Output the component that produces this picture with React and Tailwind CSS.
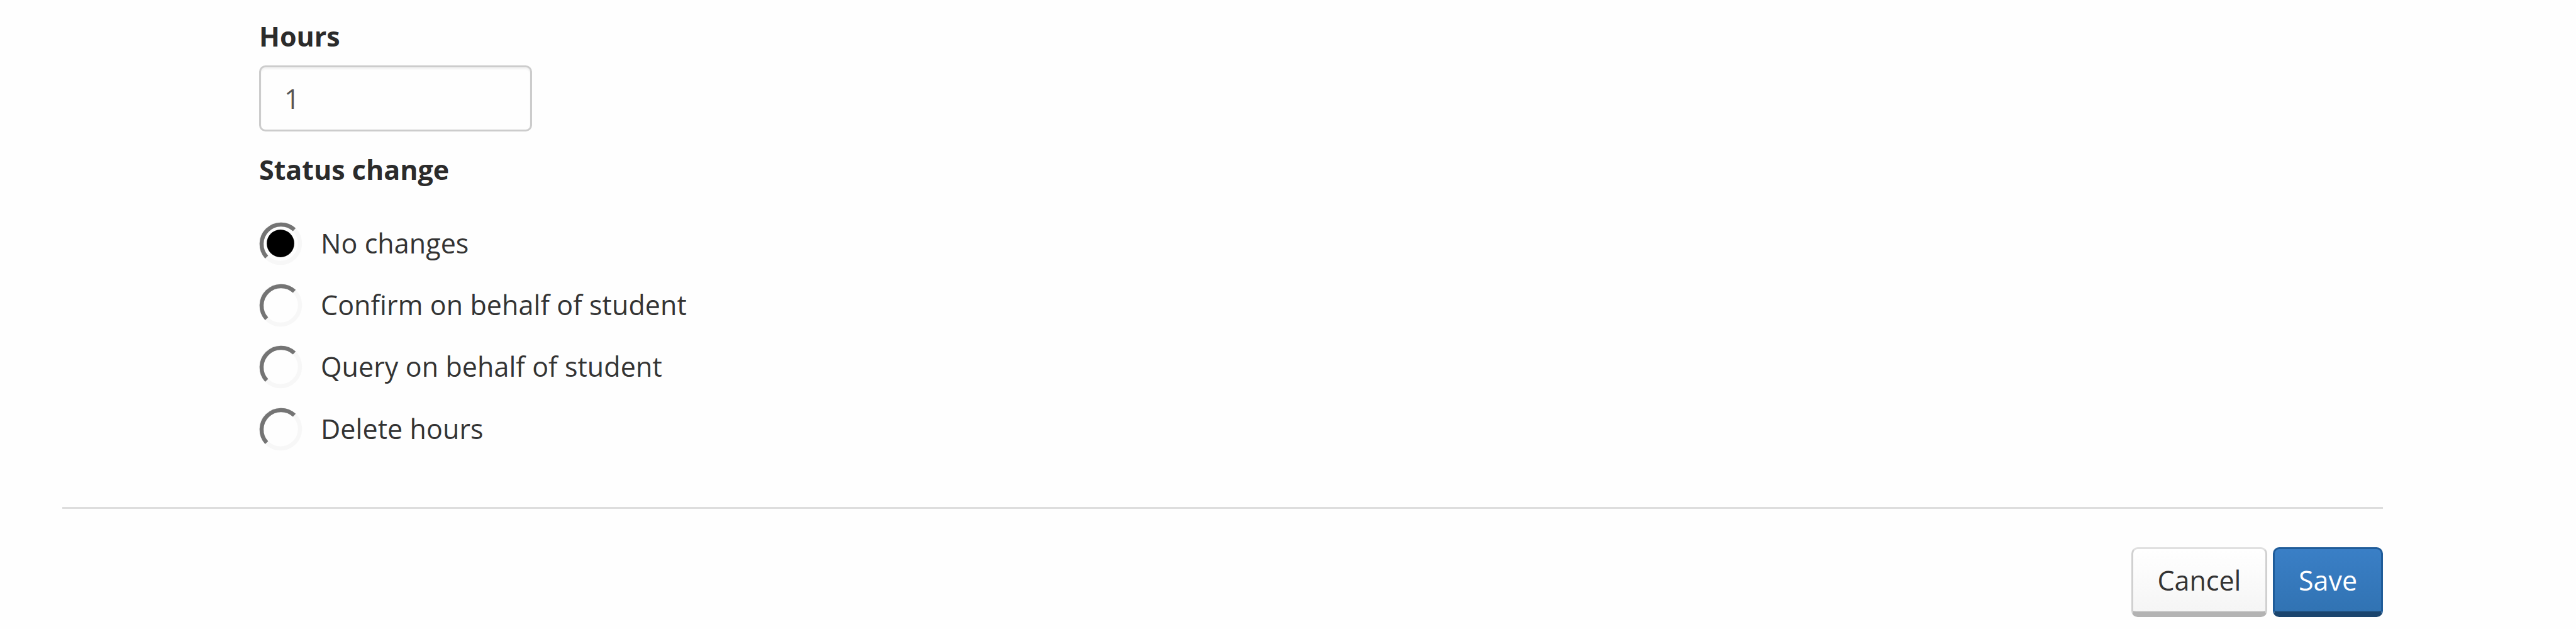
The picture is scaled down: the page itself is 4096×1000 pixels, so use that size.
const OPTIONS = [
  { label: 'No changes', checked: true },
  { label: 'Confirm on behalf of student', checked: false },
  { label: 'Query on behalf of student', checked: false },
  { label: 'Delete hours', checked: false },
];

// Inset-style radio: dark arc at the upper left, pale arc at the lower right.
function Radio({ checked }) {
  return (
    <svg className="-ml-px h-[70px] w-[70px] shrink-0" viewBox="-35 -35 70 70" fill="none">
      <circle r="31" stroke="#f7f7f7" strokeWidth="6.5" />
      <path d="M-22 21.8A31 31 0 0 1 22 -21.8" stroke="#747474" strokeWidth="6.5" />
      {checked && <circle r="21.9" fill="#000" />}
    </svg>
  );
}

export default function App() {
  return (
    <div className="h-[1000px] w-[4096px] overflow-hidden bg-[#fefefe] pt-[27px] pr-[307px] pl-[99px] font-['Open_Sans',sans-serif] text-[43px] leading-[62px] text-[#333]">
      <form className="pl-[313px]">
        <label className="block font-bold text-[#2b2b2b]">
          <span>Hours</span>
        </label>
        <div className="mt-[15px] flex h-[105px] w-[434px] items-center rounded-[10px] border-[3px] border-[#ccc] pl-[37px] text-[#555] shadow-[inset_0_3px_3px_rgba(0,0,0,0.05)]">
          <span>1</span>
        </div>
        <div className="mt-[30px] font-bold text-[#2b2b2b]">
          <span>Status change</span>
        </div>
        <div className="mt-[36.5px]">
          {OPTIONS.map((o) => (
            <label key={o.label} className="flex h-[98.4px] items-center gap-[29px]">
              <Radio checked={o.checked} />
              <span className="tracking-[0.08px]">{o.label}</span>
            </label>
          ))}
        </div>
      </form>
      <div className="mt-[75px] h-[3px] bg-[#ddd]" />
      <div className="mt-[61px] flex justify-end gap-[9px]">
        <button className="flex h-[111px] w-[216px] items-center justify-center rounded-[10px] border-[3px] border-b-[9px] border-t-[#e0e0e0] border-r-[#d0d0d0] border-b-[#b3b3b3] border-l-[#d0d0d0] bg-linear-to-b from-white to-[#f5f5f5]">
          <span>Cancel</span>
        </button>
        <button className="flex h-[111px] w-[175px] items-center justify-center rounded-[10px] border-[3px] border-b-[9px] border-[#1f5c99] border-b-[#1b456e] bg-linear-to-b from-[#3a7fc6] to-[#3173b3] text-white">
          <span>Save</span>
        </button>
      </div>
    </div>
  );
}
